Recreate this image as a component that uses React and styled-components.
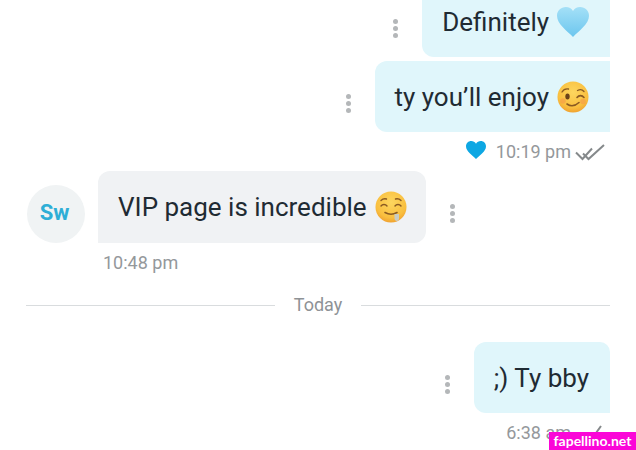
import React from 'react';
import styled, { createGlobalStyle } from 'styled-components';

const GlobalStyle = createGlobalStyle`
  html, body {
    margin: 0;
    background: #fff;
    overflow: hidden;
  }
  body {
    font-family: Roboto, "Liberation Sans", sans-serif;
  }
`;

const HeartEmoji = () => (
  <EmojiSvg viewBox="0 0 32 32">
    <defs>
      <linearGradient id="heartFill" x1="0" y1="0" x2="0" y2="1">
        <stop offset="0" stopColor="#a4e0f7" />
        <stop offset="1" stopColor="#6cc6ee" />
      </linearGradient>
    </defs>
    <path d="M16 31C10 24.500 0 18 0 9.700 0 4.500 4 1 8.800 1c3.200 0 5.800 1.500 7.200 4 1.400-2.500 4-4 7.200-4C28 1 32 4.500 32 9.700 32 18 22 24.500 16 31z" fill="url(#heartFill)" />
  </EmojiSvg>
);

const FaceBase = ({ id }) => (
  <>
    <defs>
      <radialGradient id={id} cx="0.5" cy="0.35" r="0.7">
        <stop offset="0" stopColor="#fdd65f" />
        <stop offset="0.7" stopColor="#f9bf3f" />
        <stop offset="1" stopColor="#ee9a2c" />
      </radialGradient>
    </defs>
    <circle cx="16" cy="16" r="15.500" fill={`url(#${id})`} />
  </>
);

const WinkEmoji = () => (
  <EmojiSvg viewBox="0 0 32 32">
    <FaceBase id="winkFill" />
    <g fill="none" stroke="#8a5a22" strokeWidth="1.300" strokeLinecap="round">
      <path d="M5 11c1.500-2.500 4-3.500 6.500-3" />
      <path d="M20.500 9.500c2.500-1.500 5-.8 6.500 1" />
      <path d="M20 16.500c2-2.500 5-2.500 7 0" strokeWidth="1.600" />
      <path d="M10 23c3.500 2.500 8 2.200 12-1.500" strokeWidth="1.600" />
    </g>
    <ellipse cx="10.500" cy="15.500" rx="2.200" ry="3" fill="#6b4218" />
    <circle cx="6" cy="20" r="2.800" fill="#f59a4a" opacity="0.6" />
    <circle cx="26" cy="20.500" r="2.800" fill="#f59a4a" opacity="0.6" />
  </EmojiSvg>
);

const DroolEmoji = () => (
  <EmojiSvg viewBox="0 0 32 32">
    <FaceBase id="droolFill" />
    <g fill="none" stroke="#8a5a22" strokeWidth="1.400" strokeLinecap="round">
      <path d="M6 9.500c1.500-1.500 3.500-2 5.500-1.500" />
      <path d="M20.500 8c2-.5 4 0 5.500 1.500" />
      <path d="M6 15c1.500-2 4.500-2 6 0" />
      <path d="M20 15c1.500-2 4.500-2 6 0" />
      <path d="M10 21.500c3.500 2 8.500 2 12 0" strokeWidth="1.600" />
    </g>
    <path d="M19.500 23h4.500v4.500c0 1.500-1 2.500-2.200 2.500s-2.300-1-2.300-2.500z" fill="#c9ccc4" />
  </EmojiSvg>
);

const DoubleCheck = () => (
  <TickSvg width="30" height="18" viewBox="0 0 30 18">
    <path d="M1 9.500l6.500 6.500L17 5.500" />
    <path d="M8 10.500l5.500 5.500L29 2" />
  </TickSvg>
);

const SingleCheck = () => (
  <TickSvg width="18" height="16" viewBox="0 0 18 16">
    <path d="M1 8l6 7L17 1" />
  </TickSvg>
);

const App = () => (
  <>
    <GlobalStyle />
    <Screen>
      <SentRow>
        <Dots />
        <SentBubble>Definitely <HeartEmoji /></SentBubble>
      </SentRow>
      <SecondSent>
        <Dots />
        <SentBubble>ty you’ll enjoy <WinkEmoji /></SentBubble>
      </SecondSent>
      <SentMeta>
        <LikeHeart viewBox="0 0 20 18">
          <path d="M10 18C6 14 0 10.500 0 5.300 0 2.200 2.400 0 5.200 0 7.200 0 9 1 10 2.800 11 1 12.800 0 14.800 0 17.600 0 20 2.200 20 5.300 20 10.500 14 14 10 18z" />
        </LikeHeart>
        <Stamp>10:19 pm</Stamp>
        <DoubleCheck />
      </SentMeta>

      <ReceivedRow>
        <Avatar>Sw</Avatar>
        <ReceivedBubble>VIP page is incredible <DroolEmoji /></ReceivedBubble>
        <Dots />
      </ReceivedRow>
      <ReceivedStamp>10:48 pm</ReceivedStamp>

      <DayDivider>
        <Rule />
        <DayLabel>Today</DayLabel>
        <Rule />
      </DayDivider>

      <LastSent>
        <Dots />
        <SentBubble $first>;) Ty bby</SentBubble>
      </LastSent>
      <LastMeta>
        <Stamp>6:38 am</Stamp>
        <SingleCheck />
      </LastMeta>
      <Caption>OnlyFans.com/babe</Caption>

      <Watermark>fapellino.net</Watermark>
    </Screen>
  </>
);

const Screen = styled.div`
  position: relative;
  width: 636px;
  height: 450px;
  overflow: hidden;
  background: #fff;
  display: flex;
  flex-direction: column;
  padding: 0 26px;
  box-sizing: border-box;
`;
const SentRow = styled.div`
  display: flex;
  justify-content: flex-end;
  align-items: center;
  gap: 24px;
  margin-top: -14px;
`;
const SecondSent = styled(SentRow)`
  margin-top: 4px;
`;
const LastSent = styled(SentRow)`
  margin-top: 33px;
`;
const Bubble = styled.div`
  height: 71px;
  box-sizing: border-box;
  display: flex;
  align-items: center;
  gap: 1.500px;
  white-space: pre;
  font-size: 26px;
  line-height: 32px;
  color: #1f2b33;
`;
const SentBubble = styled(Bubble)`
  background: #e0f6fb;
  padding: 0 21px 0 20px;
  border-radius: ${({ $first }) => ($first ? '12px 10px 0 12px' : '12px 0 0 12px')};
`;
const ReceivedBubble = styled(Bubble)`
  background: #f0f2f4;
  height: 72px;
  padding: 0 19px 0 20px;
  margin-left: 13px;
  border-radius: 12px 12px 12px 0;
`;
const EmojiSvg = styled.svg`
  width: 32px;
  height: 32px;
  flex: none;
`;
const DotsWrap = styled.div`
  display: flex;
  flex-direction: column;
  gap: 2px;
  margin-top: 13px;
`;
const Dot = styled.span`
  width: 5px;
  height: 5px;
  border-radius: 50%;
  background: #b4b7b9;
`;
const Dots = () => (
  <DotsWrap>
    <Dot />
    <Dot />
    <Dot />
  </DotsWrap>
);
const SentMeta = styled.div`
  display: flex;
  justify-content: flex-end;
  align-items: center;
  gap: 10px;
  height: 20px;
  margin-top: 10px;
  padding-right: 5px;
`;
const LikeHeart = styled.svg`
  width: 20px;
  height: 18px;
  fill: #0ea7e3;
  margin-bottom: 4px;
`;
const Stamp = styled.span`
  font-size: 18px;
  line-height: 20px;
  color: #94989b;
  margin-right: -6px;
`;
const TickSvg = styled.svg`
  fill: none;
  stroke: #85898b;
  stroke-width: 2;
  flex: none;
`;
const ReceivedRow = styled.div`
  display: flex;
  align-items: flex-end;
  margin-top: 9px;
  padding-left: 1px;
  & > ${DotsWrap} {
    align-self: center;
    margin-left: 24px;
  }
`;
const Avatar = styled.div`
  width: 58px;
  height: 58px;
  flex: none;
  box-sizing: border-box;
  padding: 0 3px 3px 0;
  border-radius: 50%;
  background: #f0f3f4;
  color: #2eaed6;
  font-size: 22px;
  font-weight: 700;
  display: flex;
  align-items: center;
  justify-content: center;
`;
const ReceivedStamp = styled(Stamp)`
  margin: 10px 0 0 77px;
`;
const DayDivider = styled.div`
  display: flex;
  align-items: center;
  gap: 19px;
  height: 40px;
  margin-top: 21px;
  margin-bottom: -6px;
`;
const Rule = styled.div`
  flex: 1;
  height: 1px;
  margin-top: 2px;
  background: #d9dcde;
`;
const DayLabel = styled.span`
  font-size: 18px;
  color: #8e9296;
`;
const LastMeta = styled(SentMeta)`
  margin-top: 10px;
  padding-right: 8px;
  gap: 19px;
`;
const Caption = styled.div`
  font-size: 18px;
  line-height: 20px;
  color: #70757a;
  white-space: nowrap;
  margin: 9px 0 0 348px;
`;
const Watermark = styled.div`
  position: absolute;
  right: 0;
  bottom: 0;
  width: 87px;
  height: 18px;
  background: #fb06d8;
  color: #fff;
  font-family: Lato, sans-serif;
  font-size: 14px;
  font-weight: 700;
  line-height: 18px;
  text-align: center;
  white-space: nowrap;
`;

export default App;
